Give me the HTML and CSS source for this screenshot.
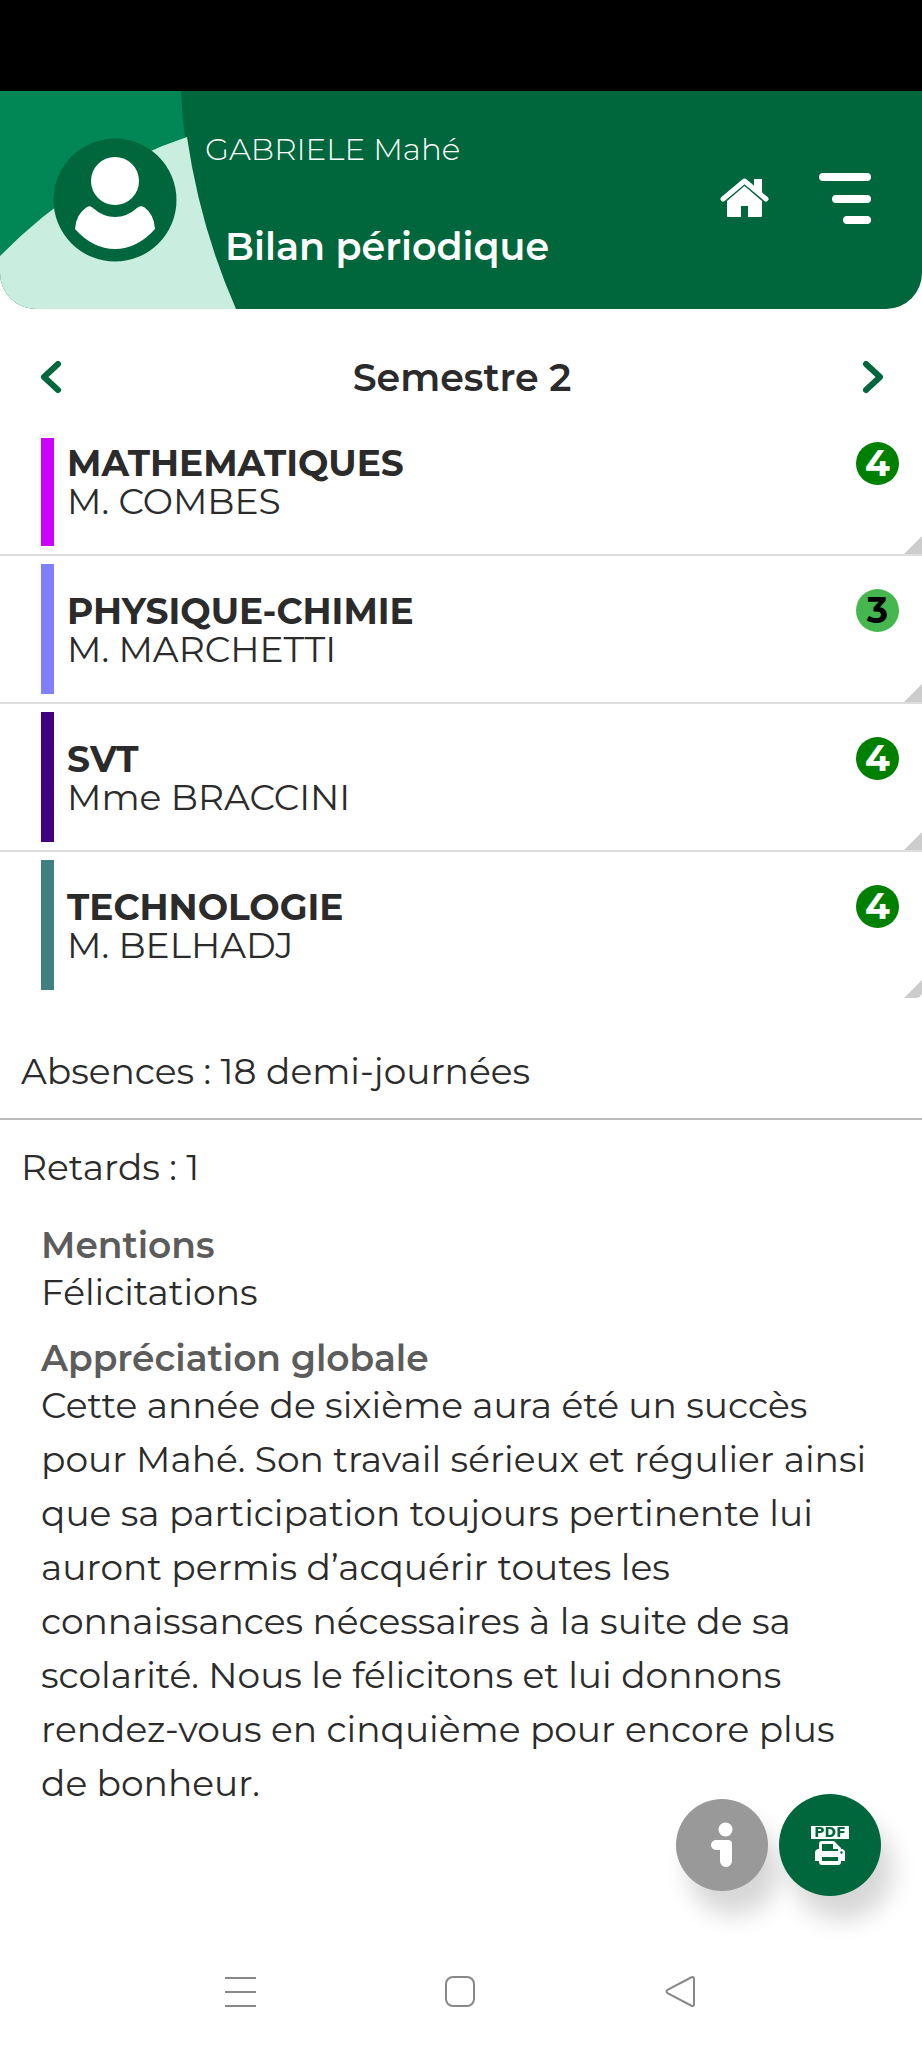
FILE: index.html
```html
<!DOCTYPE html>
<html lang="fr">
<head>
    <meta charset="UTF-8">
    <meta name="viewport" content="width=device-width, initial-scale=1.0">
    <title>Bilan périodique</title>
    <link rel="stylesheet" href="styles.css">
</head>
<body>
    <div class="status-bar"></div>

    <header class="header">
        <svg class="header-bg" width="240" height="218" viewBox="0 0 240 218" aria-hidden="true">
            <path fill="#008755" d="M0 0H181Q184 65 200 120L0 175Z"/>
            <path fill="#c9eee0" d="M0 165Q84 80 187 46Q200 136 236 218H0Z"/>
        </svg>
        <svg class="avatar" width="124" height="124" viewBox="0 0 124 124" aria-hidden="true">
            <circle cx="62" cy="62" r="61.5" fill="#00663c"/>
            <circle cx="62" cy="43" r="24" fill="#fff"/>
            <path fill="#fff" d="M34 69Q37 67 40 70Q50 79 62 79Q74 79 84 70Q87 67 91 69Q101 76 102 91Q84 111 62 111Q40 111 22 91Q23 76 34 69Z"/>
        </svg>
        <div class="header-text">
            <div class="student">GABRIELE Mahé</div>
            <h1>Bilan périodique</h1>
        </div>
        <div class="header-actions">
            <button type="button" class="icon-btn" aria-label="Accueil">
                <svg width="50" height="40" viewBox="0 0 50 40">
                    <path fill="none" stroke="#fff" stroke-width="5" stroke-linecap="round" stroke-linejoin="round" d="M3 21L24.500 3L46 21"/>
                    <path fill="#fff" d="M34 1H42V17L34 10ZM24.500 8L42 23V38Q42 39 41 39H28V28H21V39H8Q7 39 7 38V23Z"/>
                </svg>
            </button>
            <button type="button" class="icon-btn" aria-label="Menu">
                <svg width="52" height="54" viewBox="0 0 52 54">
                    <path fill="none" stroke="#fff" stroke-width="8" stroke-linecap="round" d="M4 6H48M17 28H48M28 49H48"/>
                </svg>
            </button>
        </div>
    </header>

    <main>
        <div class="period">
            <button type="button" class="icon-btn" aria-label="Période précédente">
                <svg width="22" height="34" viewBox="0 0 22 34"><path class="chevron" d="M18 3L4 16L18 29"/></svg>
            </button>
            <h2>Semestre 2</h2>
            <button type="button" class="icon-btn" aria-label="Période suivante">
                <svg width="22" height="34" viewBox="0 0 22 34"><path class="chevron" d="M4 3L18 16L4 29"/></svg>
            </button>
        </div>

        <ul class="subjects">
            <li class="subject scrolled">
                <div class="subject-info maths">
                    <strong>MATHEMATIQUES</strong>
                    <span>M. COMBES</span>
                </div>
                <span class="level level-4">4</span>
            </li>
            <li class="subject">
                <div class="subject-info physics">
                    <strong>PHYSIQUE-CHIMIE</strong>
                    <span>M. MARCHETTI</span>
                </div>
                <span class="level level-3">3</span>
            </li>
            <li class="subject">
                <div class="subject-info svt">
                    <strong>SVT</strong>
                    <span>Mme BRACCINI</span>
                </div>
                <span class="level level-4">4</span>
            </li>
            <li class="subject">
                <div class="subject-info techno">
                    <strong>TECHNOLOGIE</strong>
                    <span>M. BELHADJ</span>
                </div>
                <span class="level level-4">4</span>
            </li>
        </ul>

        <div class="school-life">
            <p>Absences : 18 demi-journées</p>
            <p>Retards : 1</p>
        </div>

        <div class="comments">
            <h3>Mentions</h3>
            <p>Félicitations</p>
            <h3>Appréciation globale</h3>
            <p>Cette année de sixième aura été un succès pour Mahé. Son travail sérieux et régulier ainsi que sa participation toujours pertinente lui auront permis d’acquérir toutes les connaissances nécessaires à la suite de sa scolarité. Nous le félicitons et lui donnons rendez-vous en cinquième pour encore plus de bonheur.</p>
        </div>
    </main>

    <div class="fabs">
        <button type="button" class="fab fab-info" aria-label="Informations">
            <svg width="22" height="46" viewBox="0 0 22 46">
                <circle cx="14.500" cy="7.500" r="7" fill="#fff"/>
                <path fill="#fff" d="M5 18H17Q21 18 21 22V39A6 6 0 0 1 9 39V28H5A5 5 0 0 1 5 18Z"/>
            </svg>
        </button>
        <button type="button" class="fab fab-pdf" aria-label="Imprimer en PDF">
            <span class="pdf-label">PDF</span>
            <svg width="32" height="24" viewBox="0 0 32 24">
                <path fill="#fff" fill-rule="evenodd" d="M8 0H20L27 7V8Q31 8 31 12V20H27V21Q27 24 24 24H8Q5 24 5 21V20H1V12Q1 8 5 8V3Q5 0 8 0ZM8 3V10H24V8H19V3ZM8 16V20H24V16Z"/>
                <circle cx="27.500" cy="11.500" r="1.200" fill="#00663c"/>
            </svg>
        </button>
    </div>

    <nav class="system-nav">
        <button type="button" class="icon-btn" aria-label="Applications récentes">
            <svg width="32" height="32" viewBox="0 0 32 32"><path d="M0 2H31M0 16H31M0 30H31"/></svg>
        </button>
        <button type="button" class="icon-btn" aria-label="Écran d'accueil">
            <svg width="32" height="32" viewBox="0 0 32 32"><rect x="1" y="1" width="28" height="29" rx="7"/></svg>
        </button>
        <button type="button" class="icon-btn" aria-label="Retour">
            <svg width="32" height="32" viewBox="0 0 32 32"><path d="M26 1.500Q29 0 29 3V28Q29 31 26 29.500L3 17.500Q0 15.500 3 13.500Z"/></svg>
        </button>
    </nav>
</body>
</html>
```
FILE: styles.css
```css
* {
    box-sizing: border-box;
}
body {
    display: flex;
    flex-direction: column;
    min-height: 100vh;
    margin: 0;
    background-color: #fff;
    color: #2b2b2b;
    font-family: Montserrat, Inter, sans-serif;
    font-size: 36px;
    font-weight: 400;
}
h1, h2, h3, p, ul {
    margin: 0;
    padding: 0;
}
.icon-btn {
    display: flex;
    padding: 0;
    border: 0;
    background: none;
}
.status-bar {
    height: 91px;
    background-color: #000;
}

/* Header */
.header {
    position: relative;
    display: flex;
    align-items: center;
    height: 218px;
    padding: 0 51px 0 53px;
    border-radius: 0 0 36px 36px;
    background-color: #00663c;
    color: #fff;
    overflow: hidden;
}
.header-bg {
    position: absolute;
    top: 0;
    left: 0;
}
.avatar {
    position: relative;
}
.header-text {
    flex: 1;
    align-self: stretch;
    display: flex;
    flex-direction: column;
    justify-content: space-between;
    padding: 38px 0 38px 28px;
}
.student {
    font-size: 31px;
    font-weight: 300;
    line-height: 40px;
}
h1 {
    padding-left: 20px;
    font-size: 38px;
    font-weight: 600;
    line-height: 48px;
}
.header-actions {
    display: flex;
    align-items: center;
    gap: 49px;
    padding-bottom: 4px;
}

/* Period selector */
.period {
    display: flex;
    align-items: center;
    justify-content: space-between;
    height: 121px;
    padding: 16px 38px 0 40px;
}
h2 {
    font-size: 38px;
    font-weight: 600;
}
.chevron {
    fill: none;
    stroke: #00663c;
    stroke-width: 6;
    stroke-linecap: round;
    stroke-linejoin: round;
}

/* Subjects */
.subjects {
    list-style: none;
}
.subject {
    position: relative;
    display: flex;
    justify-content: space-between;
    padding: 8px 23px 8px 41px;
    border-bottom: 2px solid #ddd;
}
.subject:last-child {
    border-bottom: 0;
    border-bottom-right-radius: 6px;
    overflow: hidden;
}
.subject::after {
    content: "";
    position: absolute;
    right: 0;
    bottom: 0;
    border-left: 18px solid transparent;
    border-bottom: 18px solid #ccc;
}
.subject-info {
    display: flex;
    flex-direction: column;
    height: 130px;
    padding: 28px 0 0 13px;
    border-left: 13px solid #888;
    line-height: 38px;
}
.subject-info strong {
    font-weight: 700;
}
.maths {
    border-color: #cc00ff;
}
.physics {
    border-color: #8080ff;
}
.svt {
    border-color: #400080;
}
.techno {
    border-color: #408080;
}
.level {
    width: 43px;
    height: 43px;
    margin-top: 25px;
    border-radius: 50%;
    font-weight: 700;
    line-height: 43px;
    text-align: center;
}
.level-4 {
    background-color: #008000;
    color: #fff;
}
.level-3 {
    background-color: #46b74f;
    color: #000;
}
/* first row, partly scrolled under the period selector */
.scrolled .subject-info {
    height: 108px;
    padding-top: 6px;
}
.scrolled .level {
    margin-top: 4px;
}

/* Absences and comments */
.school-life {
    padding-top: 26px;
}
.school-life p {
    padding: 22px 21px;
    line-height: 50px;
}
.school-life p:first-child {
    border-bottom: 2px solid #bbb;
}
.comments {
    padding: 11px 41px 0;
}
.comments h3 {
    color: #5c5c5c;
    font-size: 36px;
    font-weight: 600;
    line-height: 40px;
}
.comments p {
    margin-bottom: 19px;
    line-height: 54px;
}

/* Floating buttons */
.fabs {
    position: fixed;
    right: 41px;
    bottom: 152px;
    display: flex;
    align-items: center;
    gap: 11px;
}
.fab {
    display: flex;
    flex-direction: column;
    align-items: center;
    justify-content: center;
    gap: 2px;
    padding: 0;
    border: 0;
    border-radius: 50%;
    box-shadow: 12px 24px 24px rgba(0, 0, 0, 0.16);
}
.fab-info {
    width: 92px;
    height: 92px;
    background-color: #999;
}
.fab-pdf {
    width: 102px;
    height: 102px;
    background-color: #00663c;
}
.pdf-label {
    width: 38px;
    background-color: #fff;
    color: #00663c;
    font-family: "DejaVu Sans", sans-serif;
    font-size: 14px;
    font-weight: 700;
    line-height: 13px;
}

/* System navigation */
.system-nav {
    display: flex;
    align-items: center;
    justify-content: center;
    gap: 188px;
    height: 112px;
    margin-top: auto;
}
.system-nav svg {
    fill: none;
    stroke: #888;
    stroke-width: 2;
}
```
